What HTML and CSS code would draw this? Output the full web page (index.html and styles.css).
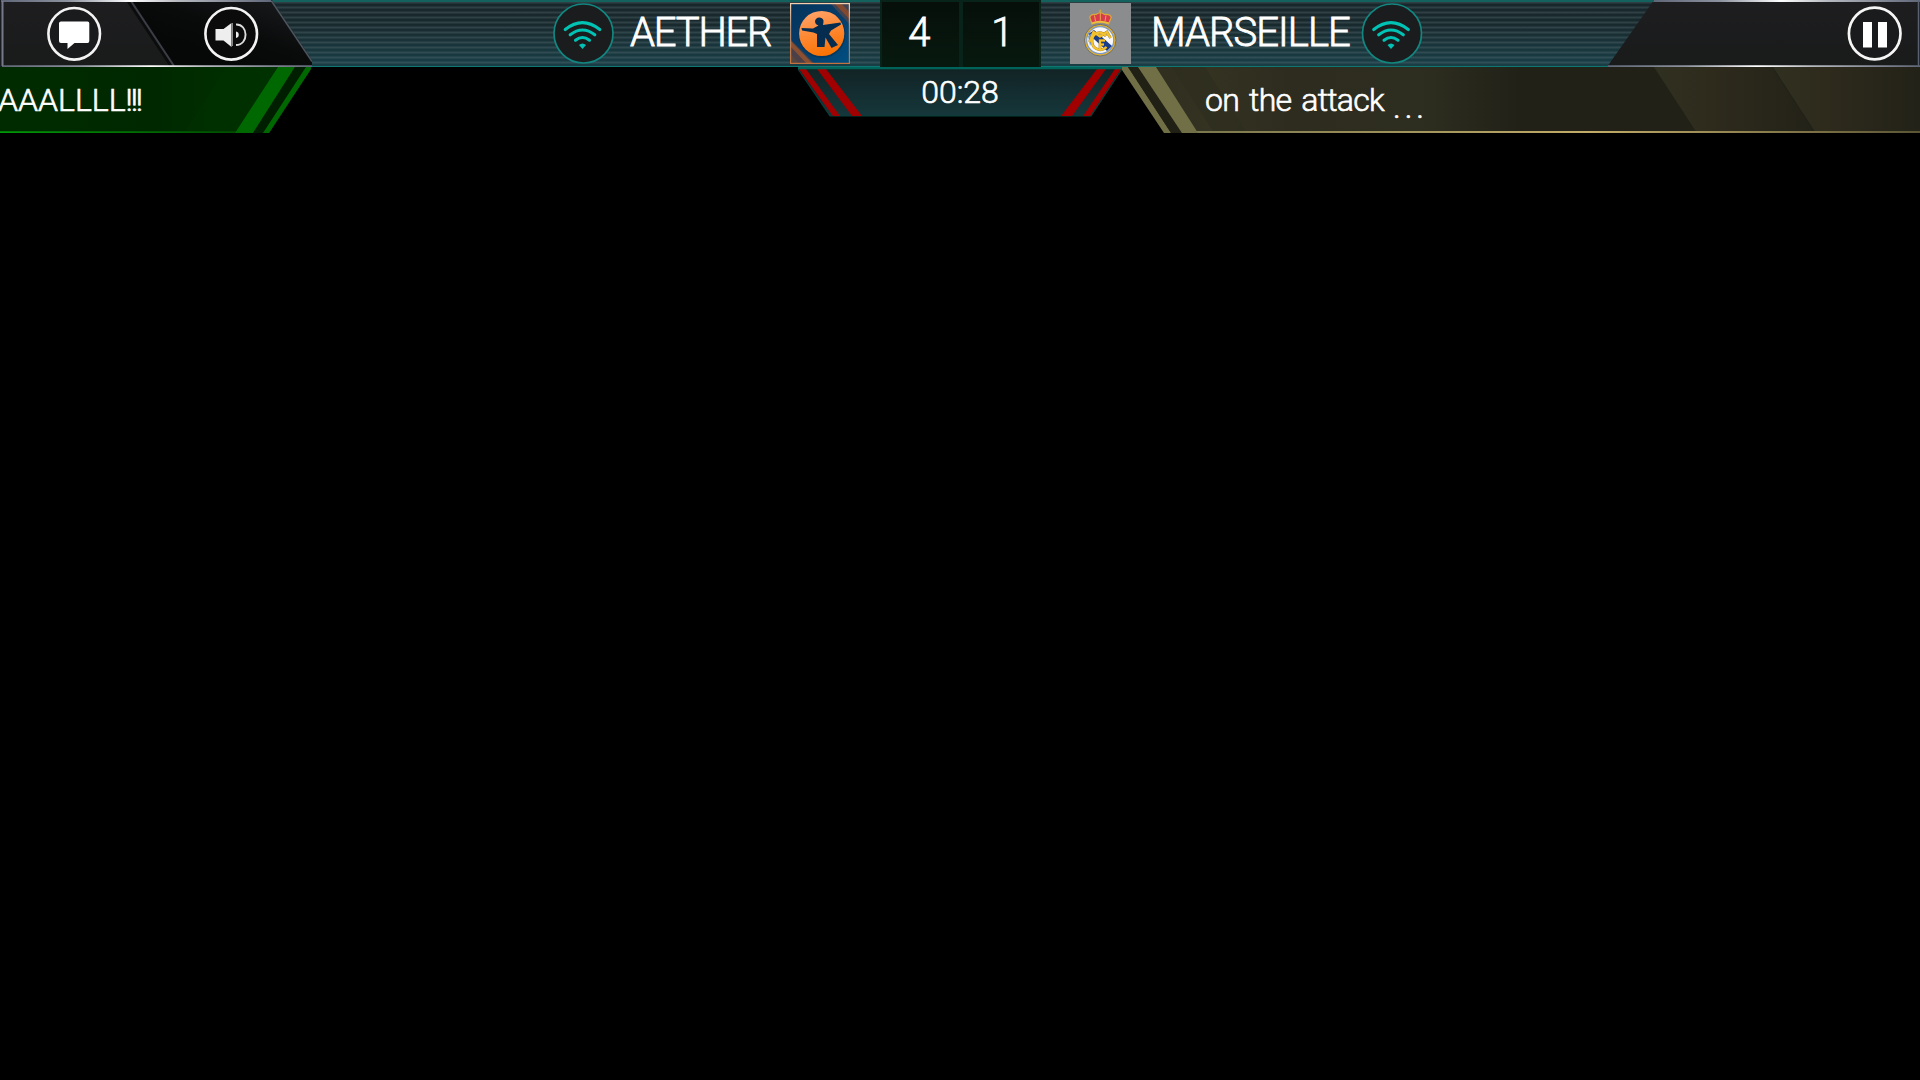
FILE: index.html
```html
<!DOCTYPE html>
<html lang="en">
<head>
<meta charset="utf-8">
<title>Match scoreboard</title>
<link rel="stylesheet" href="styles.css">
</head>
<body>
<header class="topbar">
  <div class="controls">
    <svg viewBox="0 0 312 67" width="312" height="67">
      <defs>
        <linearGradient id="shine" x1="0" x2="1"><stop offset="0" stop-color="#5f6677"/><stop offset=".25" stop-color="#8c929e"/><stop offset=".48" stop-color="#fff"/><stop offset=".65" stop-color="#b7bac0"/><stop offset="1" stop-color="#5f6677"/></linearGradient>
        <linearGradient id="dark" x1="0" y1="1" x2="1" y2="0"><stop offset=".3" stop-color="#060707"/><stop offset=".55" stop-color="#090a0a"/><stop offset="1" stop-color="#1c1d20"/></linearGradient>
        <linearGradient id="panel" x1="0" y1="0" x2="0" y2="1"><stop offset="0" stop-color="#1e1e20"/><stop offset="1" stop-color="#191a1a"/></linearGradient>
      </defs>
      <path d="M0 0H272L312 60V67H0Z" fill="url(#panel)"/>
      <path d="M131 1H272L312 61V66H174Z" fill="url(#dark)"/>
      <path d="M128 1L171 66" stroke="#0b0c0c" stroke-width="3"/>
      <path d="M131 1L174 66" stroke="#3b3d46" stroke-width="2"/>
      <path d="M271.500 1L312 61.500" stroke="#4c5660" stroke-width="1.500"/>
      <path d="M0 0H271L272 2H0Z" fill="url(#shine)"/>
      <path d="M2 65.300H312V67H2Z" fill="url(#shine)"/>
      <path d="M0 0H1V67H0Z" fill="#191b20"/>
      <path d="M1.500 1H3.500V66H1.500Z" fill="#747a88"/>
      <circle cx="74.200" cy="33.800" r="25.800" fill="#1a1b1c" stroke="#f4f4f4" stroke-width="2.600"/>
      <path d="M61 21.500H87.500Q89.300 21.500 89.300 23.300V41Q89.300 43 87.500 43H74.500L67.500 49V43H61Q59 43 59 41V23.300Q59 21.500 61 21.500Z" fill="#fff"/>
      <circle cx="231.200" cy="33.800" r="25.800" fill="#0b0b0c" stroke="#f4f4f4" stroke-width="2.600"/>
      <path d="M215.500 29H223.500L231.500 23V47L223.500 40.500H215.500Z" fill="#eee"/>
      <path d="M232.500 23V46" stroke="#888" stroke-width="1"/>
      <path d="M236 31.500A3.300 3.300 0 0 1 236 38Z" fill="#eee"/>
      <path d="M236 24.500C248.500 24 249 45 236 45" fill="none" stroke="#ddd" stroke-width="1.900"/>
    </svg>
  </div>
  <section class="team home">
    <svg class="wifi" viewBox="0 0 62 62">
      <circle cx="31" cy="30.500" r="29.500" fill="#1a1c1e" stroke="#128780" stroke-width="1.700"/>
      <g fill="none" stroke="#00c3b5" stroke-width="3.100" stroke-linecap="round"><path d="M12.700 26.500Q30 12.700 47.300 26.500"/><path d="M17.700 31.800Q30 22.200 42.300 31.800"/><path d="M23 37.200Q30 31.800 37 37.200"/></g>
      <path d="M26.500 42Q30 38.800 33.500 42L30 46Z" fill="#00c3b5"/>
    </svg>
    <span class="name aether">AETHER</span>
    <svg class="badge" viewBox="0 0 60 61">
      <defs>
        <linearGradient id="sky" x1="0" y1="0" x2="1" y2="1"><stop stop-color="#03345c"/><stop offset=".5" stop-color="#073c68"/><stop offset="1" stop-color="#005084"/></linearGradient>
        <linearGradient id="orb" x1=".3" y1="0" x2=".6" y2="1"><stop stop-color="#ffa368"/><stop offset=".45" stop-color="#ff8a36"/><stop offset="1" stop-color="#f97100"/></linearGradient>
        <linearGradient id="frame" x1="0" y1="0" x2="0" y2="1"><stop stop-color="#f6cfae"/><stop offset=".4" stop-color="#ad8e7b"/><stop offset="1" stop-color="#c3723f"/></linearGradient>
      </defs>
      <rect width="60" height="61" fill="url(#sky)"/>
      <path d="M0 36L25 61H0Z" fill="#4b4048"/><path d="M0 37L22 60L17 61L0 43Z" fill="#8a5031"/><path d="M0 50L10 61H0Z" fill="#57453f"/>
      <path d="M40 0L60 22V0Z" fill="#404352"/><path d="M44 0L60 17V10L51 0Z" fill="#83492f"/>
      <rect x=".6" y=".6" width="58.800" height="59.800" fill="none" stroke="url(#frame)" stroke-width="1.200"/>
      <circle cx="32" cy="31.500" r="23.500" fill="#062b4b" opacity=".5"/>
      <circle cx="31.700" cy="30.500" r="22.600" fill="url(#orb)"/>
      <path d="M28.500 22.500Q25 21.500 25 18Q26 14.300 29.500 14.500Q34 15 33.500 19L33 22L50.500 19.500L51 21.500L41 27.500L39 31L48 42L41.500 45L35.500 34.500L34.500 44H27L27 31L23.500 29.500L12 27.500L11.500 25L23 25.500Z" fill="#062c50"/>
    </svg>
  </section>
  <div class="score"><span class="four">4</span><span class="one">1</span></div>
  <section class="team away">
    <svg class="crest" viewBox="0 0 61 61">
      <rect width="61" height="61" fill="#8b8c8e"/>
      <path d="M22 21L19.700 14Q21.500 10.500 26 11.500Q30.300 8 34.600 11.500Q39.500 10.500 41.300 14L38.700 21Q30 18 22 21Z" fill="#d93a4c" stroke="#d9a93a" stroke-width="1.200"/>
      <path d="M25.500 18L24.500 12.500M30.300 17.500V10M35 18L36 12.500" stroke="#e9b94c" stroke-width=".9"/>
      <path d="M30.300 6.500V10M29 8H31.600" stroke="#cda83c" stroke-width="1.100"/>
      <path d="M21.800 20.200Q30 17 38.800 20.200" stroke="#ecc03f" stroke-width="1.700" fill="none"/>
      <circle cx="30.200" cy="37.200" r="15.800" fill="#e5b229" stroke="#5d6473" stroke-width=".8"/>
      <circle cx="30.200" cy="37.200" r="13.500" fill="#f8f8fa" stroke="#7c99c6" stroke-width="1.200"/>
      <path d="M18.500 31L24 27L42 43L37 48Z" fill="#193d88"/>
      <path d="M18 33L22 30L24 34L20 43Z" fill="#7aa0d4"/>
      <g fill="none"><g stroke="#a07a28" stroke-width="2.700"><path id="mono" d="M19.500 39L23.500 29L30 33.500L37 29L40.500 35M36 33C30 26 22 31 22 38C22 47 32 49 36.500 44M30 47V37.500H35M30 41.500H34"/></g>
      <use href="#mono" stroke="#f3c22f" stroke-width="1.700"/></g>
      <path d="M19.500 39L23.500 29L30 33.500L37 29L40.500 35M36 33C30 26 22 31 22 38C22 47 32 49 36.500 44M30 47V37.500H35M30 41.500H34" fill="none" stroke="#f3c22f" stroke-width="1.700"/>
    </svg>
    <span class="name marseille">MARSEILLE</span>
    <svg class="wifi" viewBox="0 0 62 62">
      <circle cx="31" cy="30.500" r="29.500" fill="#1a1c1e" stroke="#128780" stroke-width="1.700"/>
      <g fill="none" stroke="#00c3b5" stroke-width="3.100" stroke-linecap="round"><path d="M12.700 26.500Q30 12.700 47.300 26.500"/><path d="M17.700 31.800Q30 22.200 42.300 31.800"/><path d="M23 37.200Q30 31.800 37 37.200"/></g>
      <path d="M26.500 42Q30 38.800 33.500 42L30 46Z" fill="#00c3b5"/>
    </svg>
  </section>
  <div class="controls">
    <svg viewBox="0 0 313 67" width="313" height="67">
      <path d="M47 0H313V67H0Z" fill="url(#panel)"/>
      <path d="M47 0H313V2H46Z" fill="url(#shine)"/>
      <path d="M1 65.300H313V67H0Z" fill="url(#shine)"/>
      <path d="M311.500 1V66" stroke="#596171" stroke-width="1.500"/>
      <circle cx="267.700" cy="33.500" r="25.800" fill="#1a1b1c" stroke="#f6f6f6" stroke-width="2.700"/>
      <path d="M256 22H265V47.500H256ZM271 22H280V47.500H271Z" fill="#fff"/>
    </svg>
  </div>
</header>
<main class="feed">
  <div class="banner goal">
    <svg class="shape" viewBox="0 0 312 66">
      <defs>
        <linearGradient id="green" x1="0" x2="1"><stop stop-color="#002b00"/><stop offset=".5" stop-color="#002800"/><stop offset=".85" stop-color="#003200"/></linearGradient>
        <linearGradient id="greenline" x1="0" x2="1"><stop stop-color="#009a08"/><stop offset="1" stop-color="#004d00"/></linearGradient>
      </defs>
      <path d="M0 0H311V2L269 66H0Z" fill="url(#green)"/>
      <path d="M226 0L184 66H236L278 0Z" fill="#003000" opacity=".6"/>
      <path d="M0 64.300H238V66H0Z" fill="url(#greenline)"/>
      <path d="M278 0H295L253 66H235Z" fill="#006800"/>
      <path d="M295 0H306L264 66H253Z" fill="#001f00"/>
      <path d="M306 0H311V2L269 66H263Z" fill="#006800"/>
    </svg>
    <span class="line goal-text">AAALLLL<span class="bangs">!!!</span></span>
  </div>
  <div class="clock">
    <svg class="shape" viewBox="0 0 324 50">
      <defs><linearGradient id="teal" x1="0" y1="0" x2="0" y2="1"><stop stop-color="#122224"/><stop offset="1" stop-color="#15373b"/></linearGradient></defs>
      <path d="M0 0H324V2L293 49H32L0 2Z" fill="url(#teal)" stroke="#08403b" stroke-width="1.200"/>
      <path d="M1 2H8L42 49H35ZM19 2H28L64 49H54ZM323 2H317L285 49H292ZM308 2H299L263 49H274Z" fill="#a00000"/>
      <path d="M0 0H324V2.300H0Z" fill="#00645a"/>
    </svg>
    <time class="line clock-text">00:28</time>
  </div>
  <div class="banner attack">
    <svg class="shape" viewBox="0 0 798 66">
      <defs>
        <linearGradient id="olive" x1="0" x2="1"><stop stop-color="#2d2d1f"/><stop offset=".11" stop-color="#343221"/><stop offset=".21" stop-color="#2d2c1f"/><stop offset=".37" stop-color="#2e2e20"/><stop offset=".5" stop-color="#222118"/><stop offset="1" stop-color="#222118"/></linearGradient>
        <linearGradient id="facet" x1="0" x2="1"><stop stop-color="#303020"/><stop offset=".35" stop-color="#2e2b1d"/><stop offset="1" stop-color="#232218"/></linearGradient>
        <linearGradient id="gold" x1="0" x2="1"><stop stop-color="#77754c"/><stop offset=".55" stop-color="#c2ac68"/><stop offset="1" stop-color="#5b5535"/></linearGradient>
      </defs>
      <path d="M0 0H798V66H43L0 2Z" fill="url(#olive)"/>
      <path d="M50 0H83L125 66H92Z" fill="#2e2d20" opacity=".7"/>
      <path d="M532 0H650L692 66H575Z" fill="url(#facet)"/>
      <path d="M651 0H798V66H694Z" fill="url(#facet)"/>
      <path d="M60 64H798V66H60Z" fill="url(#gold)"/>
      <path d="M0 0H6L49 66H42L0 3Z" fill="#706f46"/>
      <path d="M6 0H16L60 66H49Z" fill="#202015"/>
      <path d="M16 0H34L76 66H60Z" fill="#706f46"/>
    </svg>
    <span class="line attack-text">on the attack</span><span class="line dots">...</span>
  </div>
</main>
</body>
</html>
```
FILE: styles.css
```css
body {
  margin: 0;
  height: 1080px;
  overflow: hidden;
  background: #000;
  color: #fff;
  font-family: Roboto, "Liberation Sans", sans-serif;
}
svg { display: block; flex: none; }

.topbar {
  box-sizing: border-box;
  display: grid;
  grid-template-columns: 312px 568px 161px 566px 313px;
  height: 67px;
  background:
    linear-gradient(#14625e, #14625e) 0 0 / 100% 2px no-repeat,
    linear-gradient(#0f7772, #0f7772) 0 66px / 100% 1px no-repeat,
    repeating-linear-gradient(rgba(110, 130, 135, 0) 0 1px, rgba(110, 130, 135, .27) 2px 3px, rgba(110, 130, 135, 0) 4px 5px),
    linear-gradient(#17262a, #18292d 35%, #193f47);
}

.team { display: flex; align-items: flex-start; }
.home { padding-left: 240px; }
.away { padding-left: 29px; }
.wifi { width: 62px; height: 62px; margin-top: 3px; }
.home .wifi { margin-right: 1px; transform: translateX(.5px); }
.badge { width: 60px; height: 61px; margin-top: 3px; }
.crest { width: 61px; height: 61px; margin-top: 3px; }
.name { font-size: 40px; font-weight: 300; line-height: 66px; white-space: nowrap; -webkit-text-stroke: .8px #fff; }
.aether { width: 160px; margin-left: 15px; letter-spacing: -1.2px; }
.marseille { width: 210px; margin-left: 20px; letter-spacing: -.95px; }

.score { display: grid; grid-template-columns: 1fr 1fr; font-size: 40px; line-height: 62px; text-align: center; }
.score span {
  box-sizing: border-box;
  height: 67px;
  border: 2px solid #08241a;
  border-bottom: 0;
  background: linear-gradient(#060f0a, #07190f);
  font-weight: 300;
  -webkit-text-stroke: .8px #fff;
}
.score .four { padding-right: 2px; }
.score .one { padding-left: 3px; }

.feed { display: grid; grid-template-columns: 312px 486px 324px 798px; align-items: start; }
.banner, .clock { display: grid; }
.goal { grid-column: 1; }
.clock { grid-column: 3; }
.attack { grid-column: 4; grid-template-columns: 273px 1fr; }
.shape { grid-area: 1 / 1 / 2 / -1; width: 100%; }
.line { grid-row: 1; font-size: 32px; font-weight: 300; white-space: nowrap; -webkit-text-stroke: .65px #fff; z-index: 1; }
.goal-text { grid-column: 1; line-height: 66px; margin-left: -2px; }
.bangs { letter-spacing: -2.100px; }
.clock-text { grid-column: 1; line-height: 50px; text-align: center; }
.attack-text { grid-column: 1; line-height: 67px; padding-left: 83px; letter-spacing: -.75px; word-spacing: 3px; }
.dots { grid-column: 2; line-height: 80px; letter-spacing: 4px; margin-left: -2px; }
```
